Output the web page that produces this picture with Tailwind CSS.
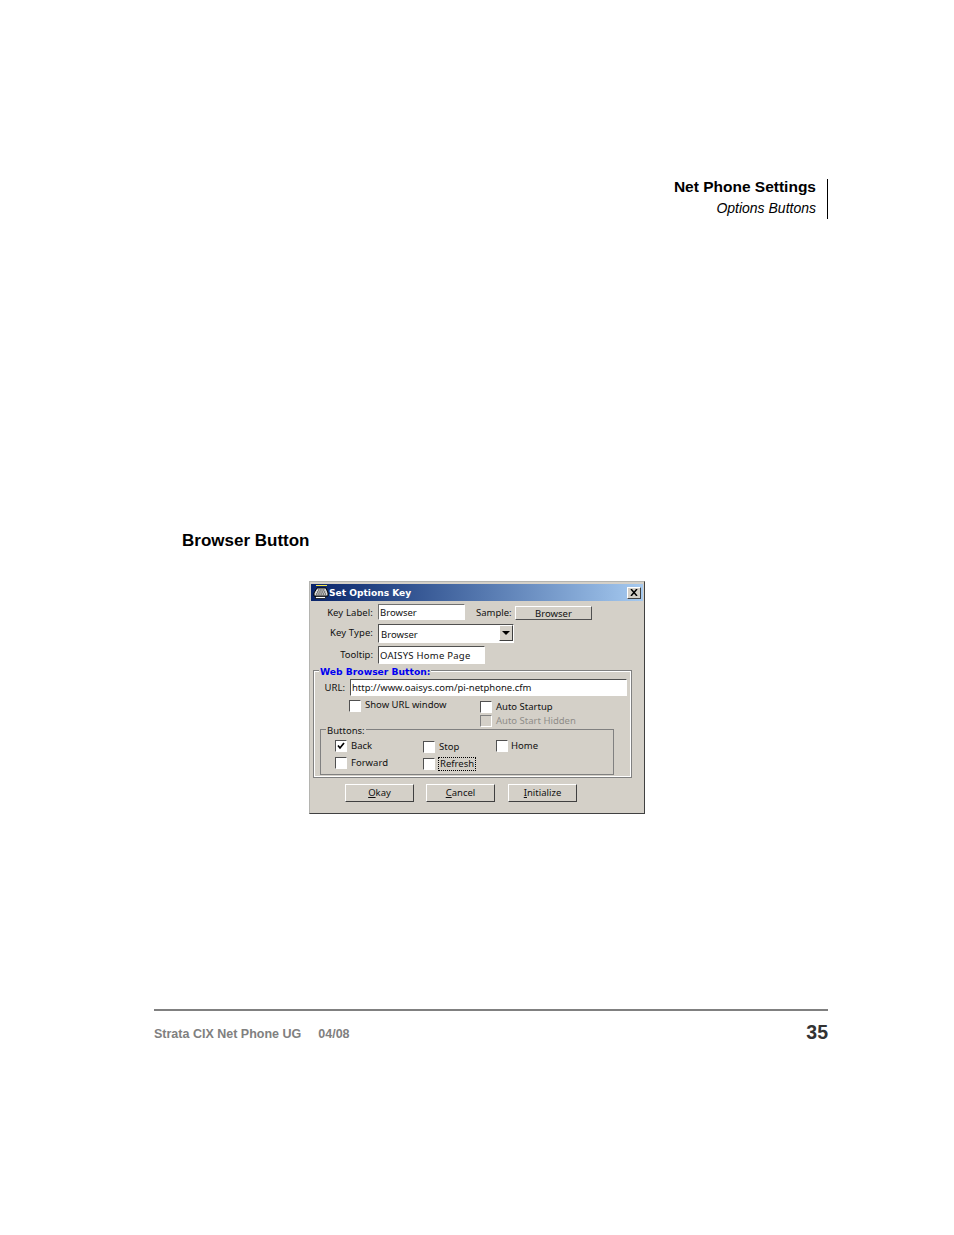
<!DOCTYPE html>
<html>
<head>
<meta charset="utf-8">
<script src="https://cdn.jsdelivr.net/npm/@tailwindcss/browser@4"></script>
</head>
<body class="bg-white">
<div class="w-[954px] h-[1235px] bg-white overflow-hidden pt-[179px] font-['Liberation_Sans',sans-serif]">
  <div class="flex justify-end pr-[126px]">
    <div class="h-[40px] border-r border-black pr-[11px] text-right text-black">
      <div class="text-[15.5px] leading-[16px] font-bold">Net Phone Settings</div>
      <div class="mt-[5px] text-[14px] leading-[16px] italic">Options Buttons</div>
    </div>
  </div>

  <h2 class="mt-[311px] ml-[182px] h-[22px] text-[17px] leading-[22px] font-bold text-black">Browser Button</h2>

  <div class="mt-[29px] ml-[309px] w-[336px] h-[233px] bg-[#d4d0c8] border border-[#b4b4b0] border-r-[#404040] border-b-[#404040] pt-[2px] px-[1px] font-['Noto_Sans',sans-serif] text-[9.5px] text-[#111]">
    <div class="h-[17px] w-[332px] flex items-center bg-linear-to-r from-[#0a246a] to-[#a6caf0] pl-[2px] pr-[2px]">
      <svg class="w-[16px] h-[15px] shrink-0" viewBox="0 0 16 15">
        <rect x="3" y="0" width="11" height="1" fill="#f6e84a"/>
        <path d="M4 3 H13 L15 8 V11 H1 V8 Z" fill="#d8d8d8" stroke="#000" stroke-width="1"/>
        <path d="M5 5 H12 M4 7 H13 M3 9 H13" stroke="#222" stroke-width="1" stroke-dasharray="1.5 0.7"/>
        <rect x="2.5" y="11.5" width="10" height="2" fill="#fff" stroke="#000" stroke-width="0.7"/>
      </svg>
      <span class="text-[9.1px] leading-[19px] h-[17px] font-bold text-white font-['DejaVu_Sans',sans-serif]">Set Options Key</span>
      <div class="ml-auto w-[14px] h-[12px] bg-[#d4d0c8] border border-white border-r-[#404040] border-b-[#404040] flex items-center justify-center">
        <svg class="w-[8px] h-[7px]" viewBox="0 0 8 7"><path d="M1 0 L7 7 M7 0 L1 7" stroke="#000" stroke-width="1.5"/></svg>
      </div>
    </div>

    <div class="mt-[3px] h-[16px] flex">
      <div class="w-[62px] text-right leading-[17px] tracking-[0.1px]">Key Label:</div>
      <div class="ml-[5px] w-[87px] h-[16px] bg-white border border-[#707070] border-r-white border-b-white pl-[1px] leading-[16px] overflow-hidden">Browser</div>
      <div class="ml-[11px] w-[36px] leading-[17px] whitespace-nowrap">Sample:</div>
      <div class="ml-[3px] mt-[2px] w-[77px] h-[14px] bg-[#d4d0c8] border border-white border-r-[#505050] border-b-[#505050] text-center leading-[13px]">Browser</div>
    </div>

    <div class="mt-[4px] h-[19px] flex">
      <div class="w-[62px] text-right leading-[18px] tracking-[0.1px]">Key Type:</div>
      <div class="ml-[5px] w-[136px] h-[19px] bg-white border border-[#505050] border-r-white border-b-white flex">
        <div class="flex-1 pl-[2px] leading-[19px]">Browser</div>
        <div class="w-[14px] h-[16px] bg-[#d4d0c8] border border-white border-r-[#404040] border-b-[#404040] flex items-center justify-center">
          <svg class="w-[8px] h-[4px]" viewBox="0 0 8 4"><path d="M0 0 H8 L4 4 Z" fill="#000"/></svg>
        </div>
      </div>
    </div>

    <div class="mt-[3px] h-[18px] flex">
      <div class="w-[62px] text-right leading-[18px]">Tooltip:</div>
      <div class="ml-[5px] w-[107px] h-[18px] bg-white border border-[#505050] border-r-white border-b-white pl-[1px] leading-[17px] tracking-[0.25px] overflow-hidden whitespace-nowrap">OAISYS Home Page</div>
    </div>

    <div class="relative mt-[6px] ml-[2px] w-[319px] h-[108px] border border-[#808080] outline outline-white -outline-offset-2 pt-[8px]">
      <div class="absolute -top-[5px] left-[5px] bg-[#d4d0c8] px-[1px] leading-[12px] text-[9.2px] font-bold text-[#0000f0] font-['DejaVu_Sans',sans-serif]">Web Browser Button:</div>
      <div class="h-[17px] flex">
        <div class="w-[31px] text-right leading-[18px]">URL:</div>
        <div class="ml-[5px] w-[277px] h-[17px] bg-white border border-[#505050] border-r-white border-b-white pl-[1px] leading-[15px] overflow-hidden whitespace-nowrap">http://www.oaisys.com/pi-netphone.cfm</div>
      </div>

      <div class="h-[31px] flex">
        <div class="ml-[35px] w-[131px] pt-[4px]">
          <div class="flex h-[12px]">
            <span class="w-[12px] h-[12px] bg-white border border-[#505050] border-r-white border-b-white"></span>
            <span class="ml-[4px] leading-[10px]">Show URL window</span>
          </div>
        </div>
        <div class="pt-[5px] flex flex-col gap-[2px]">
          <div class="flex h-[12px]">
            <span class="w-[12px] h-[12px] bg-white border border-[#505050] border-r-white border-b-white"></span>
            <span class="ml-[4px] leading-[12px]">Auto Startup</span>
          </div>
          <div class="flex h-[12px]">
            <span class="w-[12px] h-[12px] bg-[#d4d0c8] border border-[#808080] border-r-white border-b-white"></span>
            <span class="ml-[4px] leading-[12px] text-[#8f8d88]">Auto Start Hidden</span>
          </div>
        </div>
      </div>

      <div class="relative mt-[2px] ml-[6px] w-[294px] h-[46px] border border-[#808080] flex pl-[14px]">
        <div class="absolute -top-[5px] left-[5px] bg-[#d4d0c8] px-[1px] leading-[12px]">Buttons:</div>
        <div class="w-[88px] pt-[10px] flex flex-col gap-[5px]">
          <div class="flex h-[12px]">
            <span class="w-[12px] h-[12px] bg-white border border-[#505050] border-r-white border-b-white flex items-center justify-center">
              <svg class="w-[8px] h-[8px]" viewBox="0 0 8 8"><path d="M1 3.5 L3 6 L7 1" fill="none" stroke="#000" stroke-width="1.7"/></svg>
            </span>
            <span class="ml-[4px] leading-[12px]">Back</span>
          </div>
          <div class="flex h-[12px]">
            <span class="w-[12px] h-[12px] bg-white border border-[#505050] border-r-white border-b-white"></span>
            <span class="ml-[4px] leading-[12px]">Forward</span>
          </div>
        </div>
        <div class="w-[73px] pt-[11px] flex flex-col gap-[5px]">
          <div class="flex h-[12px]">
            <span class="w-[12px] h-[12px] bg-white border border-[#505050] border-r-white border-b-white"></span>
            <span class="ml-[4px] leading-[12px]">Stop</span>
          </div>
          <div class="flex h-[12px]">
            <span class="w-[12px] h-[12px] bg-white border border-[#505050] border-r-white border-b-white"></span>
            <span class="ml-[3px] -mt-[1px] px-[1px] h-[14px] border border-dotted border-black leading-[12px] whitespace-nowrap">Refresh</span>
          </div>
        </div>
        <div class="pt-[10px]">
          <div class="flex h-[12px]">
            <span class="w-[12px] h-[12px] bg-white border border-[#505050] border-r-white border-b-white"></span>
            <span class="ml-[3px] leading-[12px]">Home</span>
          </div>
        </div>
      </div>
    </div>

    <div class="mt-[6px] ml-[34px] flex">
      <div class="w-[69px] h-[18px] bg-[#d4d0c8] border border-white border-r-[#404040] border-b-[#404040] text-center leading-[16px]"><span class="underline">O</span>kay</div>
      <div class="ml-[12px] w-[69px] h-[18px] bg-[#d4d0c8] border border-white border-r-[#404040] border-b-[#404040] text-center leading-[16px]"><span class="underline">C</span>ancel</div>
      <div class="ml-[13px] w-[69px] h-[18px] bg-[#d4d0c8] border border-white border-r-[#404040] border-b-[#404040] text-center leading-[16px]"><span class="underline">I</span>nitialize</div>
    </div>
  </div>

  <div class="mt-[195px] ml-[154px] w-[674px] h-[2px] bg-[#808080]"></div>
  <div class="ml-[154px] w-[674px] flex justify-between">
    <div class="mt-[16px] text-[12.5px] leading-[15px] font-bold text-[#808080]"><span>Strata CIX Net Phone UG</span><span class="ml-[17px]">04/08</span></div>
    <div class="mt-[10px] text-[19.5px] leading-[22px] font-bold text-[#333]">35</div>
  </div>
</div>
</body>
</html>
